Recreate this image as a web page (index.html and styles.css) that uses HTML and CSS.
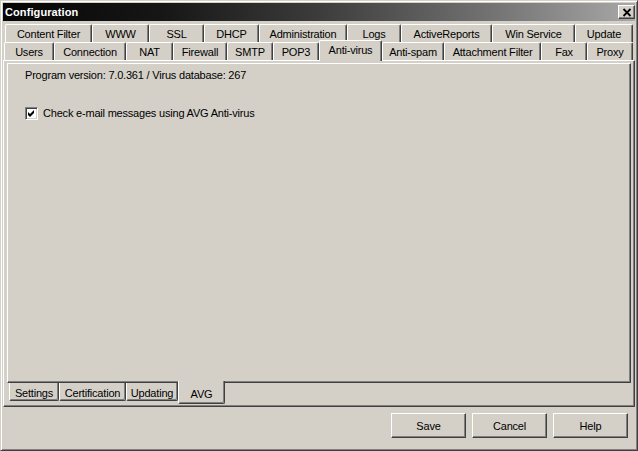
FILE: index.html
```html
<!DOCTYPE html>
<html>
<head>
<meta charset="utf-8">
<title>Configuration</title>
<link rel="stylesheet" href="styles.css">
</head>
<body>
<div class="window">
  <div class="titlebar">
    <span class="title">Configuration</span>
    <button class="close" aria-label="Close">
      <svg width="10" height="9" viewBox="0 0 10 9"><path d="M1.5 1 L8.5 8 M8.5 1 L1.5 8" stroke="#000" stroke-width="1.8" fill="none"/></svg>
    </button>
  </div>
  <div class="tabs">
    <div class="tabrow back">
      <div class="tab">Content Filter</div>
      <div class="tab">WWW</div>
      <div class="tab">SSL</div>
      <div class="tab">DHCP</div>
      <div class="tab">Administration</div>
      <div class="tab">Logs</div>
      <div class="tab">ActiveReports</div>
      <div class="tab">Win Service</div>
      <div class="tab">Update</div>
    </div>
    <div class="tabrow front">
      <div class="tab">Users</div>
      <div class="tab">Connection</div>
      <div class="tab">NAT</div>
      <div class="tab">Firewall</div>
      <div class="tab">SMTP</div>
      <div class="tab">POP3</div>
      <div class="tab active">Anti-virus</div>
      <div class="tab">Anti-spam</div>
      <div class="tab">Attachment Filter</div>
      <div class="tab">Fax</div>
      <div class="tab">Proxy</div>
    </div>
  </div>
  <div class="page">
    <div class="subpage">
      <p class="info">Program version: 7.0.361 / Virus database: 267</p>
      <label class="check">
        <span class="box"><svg width="7" height="7" viewBox="0 0 7 7"><path d="M0 2 L2 4 L6 0 L6 3 L2 7 L0 5 Z" fill="#000"/></svg></span>
        <span class="check-text">Check e-mail messages using AVG Anti-virus</span>
      </label>
    </div>
    <div class="subtabs">
      <div class="subtab">Settings</div>
      <div class="subtab">Certification</div>
      <div class="subtab">Updating</div>
      <div class="subtab active">AVG</div>
    </div>
  </div>
  <div class="buttons">
    <button class="btn">Save</button>
    <button class="btn">Cancel</button>
    <button class="btn">Help</button>
  </div>
</div>
</body>
</html>
```
FILE: styles.css
```css
* { box-sizing: border-box; }
html, body { margin: 0; padding: 0; }
body {
  width: 638px;
  height: 451px;
  overflow: hidden;
  background: #d4d0c8;
  font-family: "Liberation Sans", Arial, sans-serif;
  font-size: 11px;
  letter-spacing: -0.2px;
  color: #000;
}
.window {
  width: 638px;
  height: 451px;
  background: #d4d0c8;
  border: 1px solid;
  border-color: #d4d0c8 #404040 #404040 #d4d0c8;
  box-shadow: inset 1px 1px #fff, inset -1px -1px #808080;
  padding: 2px;
  display: flex;
  flex-direction: column;
}
.titlebar {
  flex: none;
  height: 18px;
  display: flex;
  align-items: center;
  justify-content: space-between;
  padding: 0 0 0 2px;
  background: linear-gradient(to right, #060606 0%, #161616 25%, #3c3c3c 50%, #747474 78%, #a8a8a8 100%);
}
.title {
  color: #fff;
  font-weight: bold;
  font-size: 11px;
  letter-spacing: 0.1px;
}
.close {
  width: 17px;
  height: 14px;
  padding: 0;
  margin: 0;
  background: #d4d0c8;
  border: 1px solid;
  border-color: #fff #404040 #404040 #fff;
  box-shadow: inset -1px -1px #808080;
  display: flex;
  align-items: center;
  justify-content: center;
}
.close svg { display: block; }

.tabs { flex: none; padding-top: 3px; }
.tabrow { display: flex; }
.tabrow.back { height: 18px; padding-left: 2px; }
.tabrow.front { height: 18px; padding-left: 1px; align-items: flex-end; }
.tab {
  flex: none;
  height: 18px;
  border: 1px solid;
  border-bottom: 0;
  border-color: #fff #404040 #fff #fff;
  box-shadow: inset -1px 0 #808080;
  border-radius: 2px 2px 0 0;
  background: #d4d0c8;
  text-align: center;
  line-height: 18px;
  white-space: nowrap;
}
.tab.active {
  height: 21px;
  margin-bottom: -1px;
  position: relative;
  z-index: 2;
}
.back .tab:nth-child(1) { width: 87px; }
.back .tab:nth-child(2) { width: 57px; }
.back .tab:nth-child(3) { width: 55px; }
.back .tab:nth-child(4) { width: 55px; }
.back .tab:nth-child(5) { width: 88px; }
.back .tab:nth-child(6) { width: 54px; }
.back .tab:nth-child(7) { width: 91px; }
.back .tab:nth-child(8) { width: 83px; }
.back .tab:nth-child(9) { width: 58px; }
.front .tab:nth-child(1) { width: 50px; }
.front .tab:nth-child(2) { width: 72px; }
.front .tab:nth-child(3) { width: 47px; }
.front .tab:nth-child(4) { width: 54px; }
.front .tab:nth-child(5) { width: 46px; }
.front .tab:nth-child(6) { width: 46px; }
.front .tab:nth-child(7) { width: 63px; }
.front .tab:nth-child(8) { width: 62px; }
.front .tab:nth-child(9) { width: 97px; }
.front .tab:nth-child(10) { width: 46px; }
.front .tab:nth-child(11) { width: 46px; }

.page {
  flex: none;
  height: 347px;
  border: 1px solid;
  border-color: #fff #404040 #404040 #fff;
  box-shadow: inset -1px -1px #808080;
  padding: 2px 3px 0 3px;
  display: flex;
  flex-direction: column;
}
.subpage {
  flex: none;
  height: 320px;
  border: 1px solid;
  border-color: #fff #404040 #404040 #fff;
  box-shadow: inset -1px -1px #808080;
  padding: 5px 17px 0 17px;
}
.info {
  margin: 0;
  line-height: 13px;
}
.check {
  margin-top: 25px;
  height: 13px;
  display: flex;
  align-items: center;
}
.box {
  flex: none;
  width: 13px;
  height: 13px;
  background: #fff;
  border: 1px solid;
  border-color: #808080 #fff #fff #808080;
  box-shadow: inset 1px 1px #404040, inset -1px -1px #d4d0c8;
  display: flex;
  align-items: center;
  justify-content: center;
}
.box svg { display: block; }
.check-text {
  margin-left: 5px;
  line-height: 11px;
}

.subtabs {
  flex: none;
  display: flex;
  height: 19px;
  padding-left: 2px;
  align-items: flex-start;
}
.subtab {
  flex: none;
  height: 18px;
  border: 1px solid;
  border-top: 0;
  border-color: #fff #404040 #404040 #fff;
  box-shadow: inset -1px -1px #808080;
  border-radius: 0 0 2px 2px;
  background: #d4d0c8;
  text-align: center;
  padding-top: 2px;
  line-height: 16px;
  white-space: nowrap;
}
.subtab.active {
  height: 23px;
  margin-top: -2px;
  padding-top: 5px;
  position: relative;
  z-index: 2;
}
.subtab:nth-child(1) { width: 50px; }
.subtab:nth-child(2) { width: 67px; }
.subtab:nth-child(3) { width: 52px; }
.subtab:nth-child(4) { width: 47px; }

.buttons {
  flex: none;
  display: flex;
  justify-content: flex-end;
  gap: 6px;
  padding: 6px 7px 0 0;
}
.btn {
  width: 75px;
  height: 25px;
  margin: 0;
  padding: 0;
  background: #d4d0c8;
  border: 1px solid;
  border-color: #fff #404040 #404040 #fff;
  box-shadow: inset -1px -1px #808080;
  font-family: "Liberation Sans", Arial, sans-serif;
  font-size: 11px;
  letter-spacing: -0.2px;
  color: #000;
}
```
